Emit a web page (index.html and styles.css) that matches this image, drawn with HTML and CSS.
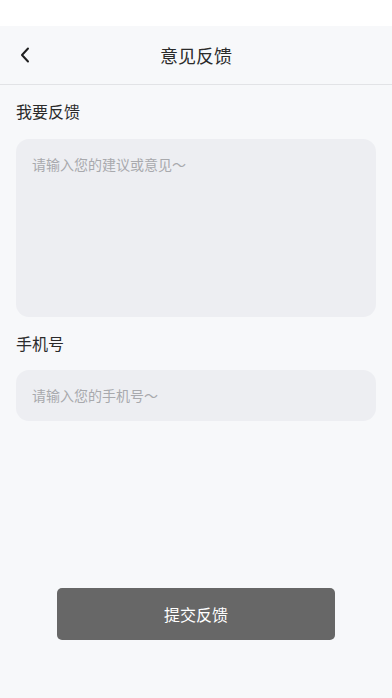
FILE: index.html
```html
<!DOCTYPE html>
<html lang="zh-CN">
<head>
<meta charset="utf-8">
<meta name="viewport" content="width=device-width, initial-scale=1">
<title>意见反馈</title>
<link rel="stylesheet" href="styles.css">
</head>
<body>
<div class="page">
  <div class="statusbar"></div>
  <header class="navbar">
    <button class="back" aria-label="返回">
      <svg width="12" height="16" viewBox="0 0 12 16"><path d="M9 1.5 L3 8 L9 14.5" fill="none" stroke="#1f1f1f" stroke-width="2" stroke-linecap="round" stroke-linejoin="round"/></svg>
    </button>
    <h1 class="title">意见反馈</h1>
  </header>
  <main class="content">
    <div class="label label-first">我要反馈</div>
    <textarea class="field textarea" placeholder="请输入您的建议或意见～"></textarea>
    <div class="label">手机号</div>
    <input class="field input" type="text" placeholder="请输入您的手机号～">
  </main>
  <footer class="footer">
    <button class="submit">提交反馈</button>
  </footer>
</div>
</body>
</html>
```

FILE: styles.css
```css
* { box-sizing: border-box; }
html, body { margin: 0; padding: 0; }
body {
  background: #f7f8fa;
  font-family: "Noto Sans CJK SC", "Noto Sans", sans-serif;
  color: #333;
}
.page {
  min-height: 698px;
  display: flex;
  flex-direction: column;
}
.statusbar {
  height: 26px;
  background: #ffffff;
}
.navbar {
  height: 59px;
  display: flex;
  align-items: center;
  justify-content: center;
  position: relative;
  border-bottom: 1px solid #e2e3e6;
  background: #f7f8fa;
}
.back {
  position: absolute;
  left: 17px;
  top: 50%;
  transform: translateY(-50%);
  border: 0;
  background: none;
  padding: 0;
  width: 16px;
  height: 18px;
  display: flex;
  align-items: center;
  justify-content: center;
}
.title {
  margin: 0 0 1px;
  font-size: 18px;
  font-weight: 400;
  color: #2b2b2b;
  line-height: 24px;
}
.content {
  flex: 1;
  padding: 0 16px;
  display: flex;
  flex-direction: column;
}
.label {
  font-size: 16px;
  line-height: 22px;
  color: #2b2b2b;
  margin-top: 15px;
  margin-bottom: 16px;
}
.label-first {
  margin-top: 15px;
  margin-bottom: 17px;
}
.field {
  width: 100%;
  border: 0;
  outline: none;
  background: #edeef2;
  border-radius: 13px;
  font-family: inherit;
  font-size: 14px;
  color: #333;
  padding: 0 16px;
}
.field::placeholder { color: #a8a9ad; }
.textarea {
  height: 178px;
  padding-top: 15px;
  line-height: 20px;
  resize: none;
  display: block;
}
.input {
  height: 51px;
  line-height: 20px;
  padding-bottom: 1px;
}
.footer {
  display: flex;
  justify-content: center;
  padding-bottom: 58px;
}
.submit {
  width: 278px;
  height: 52px;
  border: 0;
  border-radius: 5px;
  background: #676767;
  color: #ffffff;
  font-family: inherit;
  font-size: 16px;
  padding-bottom: 2px;
}
```
